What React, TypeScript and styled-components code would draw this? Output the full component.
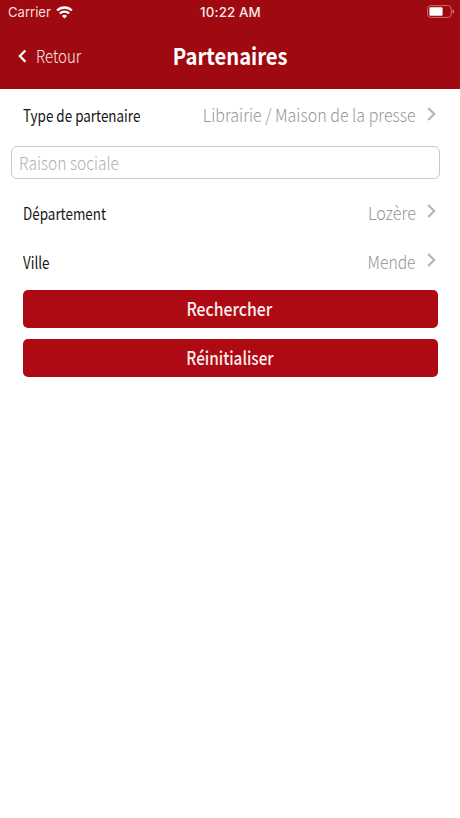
import React from "react";
import styled, { createGlobalStyle } from "styled-components";

const Global = createGlobalStyle`
  * { box-sizing: border-box; }
  html, body { margin: 0; background: #fff; }
  body { font-family: "Noto Sans CJK JP", "Roboto", sans-serif; }
`;

const Phone = styled.main`
  width: 460px;
  height: 818px;
  overflow: hidden;
  background: #fff;
`;

const Header = styled.header`
  height: 89px;
  background: #9f0a10;
  color: #fff;
`;

const StatusBar = styled.div`
  display: grid;
  grid-template-columns: 1fr auto 1fr;
  align-items: center;
  height: 24px;
  padding: 0 6px 0 8px;
  font: 400 13.1px/24px "Inter", sans-serif;
`;

const Carrier = styled.div`
  display: flex;
  align-items: center;
  gap: 5px;
  color: #f8dfdf;
`;

const Clock = styled.div`
  margin-right: 1px;
  font-weight: 500;
  font-size: 13.3px;
  letter-spacing: 0.15px;
  color: #fbe9e9;
`;

const Battery = styled.svg`
  justify-self: end;
  display: block;
  margin: 0 -1px 2px 0;
`;

const NavBar = styled.nav`
  display: grid;
  grid-template-columns: 1fr auto 1fr;
  align-items: center;
  height: 65px;
  padding: 0 18px;
`;

const Back = styled.a`
  display: flex;
  align-items: center;
  gap: 9px;
  color: #fbe9e9;
`;

/* Condensed lettering: a narrow horizontal scale anchored on the aligned edge. */
const Label = styled.span<{
  $size: number;
  $weight: number;
  $narrow: number;
  $anchor?: "left" | "center" | "right";
}>`
  display: inline-block;
  padding-bottom: 2px;
  font-size: ${(p) => p.$size}px;
  font-weight: ${(p) => p.$weight};
  line-height: 24px;
  white-space: nowrap;
  transform: scaleX(${(p) => p.$narrow});
  transform-origin: ${(p) => p.$anchor ?? "left"} center;
`;

const Title = styled.h1`
  display: flex;
  margin: 0 0 2px;
`;

const Form = styled.form`
  display: flex;
  flex-direction: column;
`;

const Row = styled.div<{ $height: number }>`
  display: flex;
  align-items: center;
  justify-content: space-between;
  height: ${(p) => p.$height}px;
  padding: 0 24px 0 22.5px;
  color: #161616;
`;

const Value = styled.span`
  display: flex;
  align-items: center;
  gap: 11px;
  color: #969696;
`;

const Field = styled.div`
  display: flex;
  align-items: center;
  height: 33px;
  margin: 3px 20px 10px 11px;
  padding-left: 7px;
  border: 1px solid #c8c8c8;
  border-radius: 6px;
  color: #b0b0b0;
`;

const Actions = styled.div`
  display: flex;
  flex-direction: column;
  gap: 11px;
  padding: 3px 22.5px 0;
`;

const Button = styled.button`
  display: flex;
  align-items: center;
  justify-content: center;
  height: 38px;
  padding: 0 1px 0 0;
  border: 0;
  border-radius: 5px;
  background: #ae0a13;
  color: #fdeeee;
  font-family: inherit;
`;

const Chevron = styled.svg`
  display: block;
  margin-bottom: 5px;
`;

function Disclosure() {
  return (
    <Chevron width="9" height="14" viewBox="0 0 9 14" fill="none">
      <path d="M1.200 1 7.200 7 1.200 13" stroke="#b5b5b5" strokeWidth="2.200" />
    </Chevron>
  );
}

export default function App() {
  return (
    <Phone>
      <Global />
      <Header>
        <StatusBar>
          <Carrier>
            Carrier
            <svg width="17" height="13" viewBox="0 0 17 13" fill="none" stroke="#fff">
              <path d="M1.1 4.5a10.6 10.6 0 0 1 14.8 0" strokeWidth="2.3" />
              <path d="M3.8 7.5a6.7 6.7 0 0 1 9.4 0" strokeWidth="2.2" />
              <path d="M8.5 12.6 5.9 9.9a3.8 3.8 0 0 1 5.2 0z" fill="#fff" stroke="none" />
            </svg>
          </Carrier>
          <Clock>10:22 AM</Clock>
          <Battery width="28" height="13" viewBox="0 0 28 13">
            <rect x="0.6" y="0.6" width="23.6" height="11.8" rx="3" fill="none" stroke="#d0686c" />
            <rect x="2.4" y="2.3" width="13.2" height="8.4" rx="1.2" fill="#fff" />
            <path d="M25.5 4.4c2 .6 2 3.600 0 4.200z" fill="#d98486" />
          </Battery>
        </StatusBar>
        <NavBar>
          <Back>
            <svg width="9" height="14" viewBox="0 0 9 14" fill="none">
              <path d="M7.400 0.500 1.900 6l5.500 5.700" stroke="#fff" strokeWidth="2.300" />
            </svg>
            <Label $size={17.3} $weight={300} $narrow={0.87}>Retour</Label>
          </Back>
          <Title>
            <Label $size={23} $weight={700} $narrow={0.88} $anchor="center">Partenaires</Label>
          </Title>
        </NavBar>
      </Header>
      <Form>
        <Row $height={54}>
          <Label $size={16.6} $weight={400} $narrow={0.81}>Type de partenaire</Label>
          <Value>
            <Label $size={17.5} $weight={300} $narrow={0.915} $anchor="right">
              Librairie / Maison de la presse
            </Label>
            <Disclosure />
          </Value>
        </Row>
        <Field>
          <Label $size={17.8} $weight={300} $narrow={0.875}>Raison sociale</Label>
        </Field>
        <Row $height={49}>
          <Label $size={16.6} $weight={400} $narrow={0.81}>Département</Label>
          <Value>
            <Label $size={17.5} $weight={300} $narrow={0.925} $anchor="right">Lozère</Label>
            <Disclosure />
          </Value>
        </Row>
        <Row $height={49}>
          <Label $size={16.6} $weight={400} $narrow={0.81}>Ville</Label>
          <Value>
            <Label $size={17.5} $weight={300} $narrow={0.895} $anchor="right">Mende</Label>
            <Disclosure />
          </Value>
        </Row>
        <Actions>
          <Button type="button">
            <Label $size={18.2} $weight={500} $narrow={0.87} $anchor="center">Rechercher</Label>
          </Button>
          <Button type="button">
            <Label $size={18.2} $weight={500} $narrow={0.84} $anchor="center">Réinitialiser</Label>
          </Button>
        </Actions>
      </Form>
    </Phone>
  );
}
